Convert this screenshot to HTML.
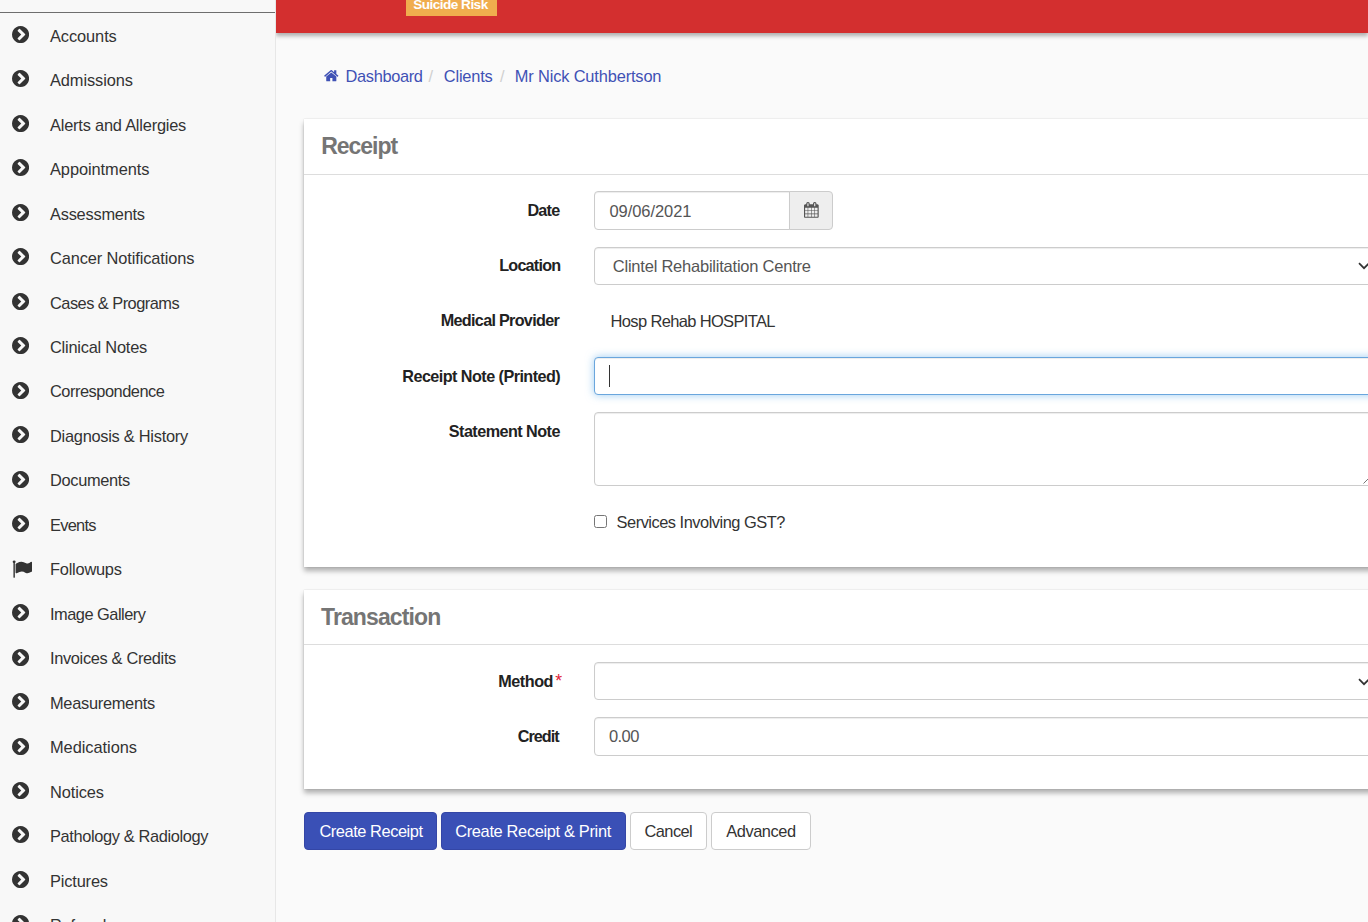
<!DOCTYPE html>
<html lang="en">
<head>
<meta charset="utf-8">
<title>Receipt</title>
<style>
*{box-sizing:border-box}
html,body{margin:0;padding:0}
body{width:1368px;height:922px;overflow:hidden;background:#fafafa;font-family:"Liberation Sans",sans-serif;font-size:15.4px;color:#333;position:relative}
a{text-decoration:none;color:inherit}
/* sidebar */
#side{z-index:5;position:absolute;left:0;top:0;width:276px;height:922px;background:#f8f8f8;border-right:1px solid #e7e7e7}
#side .hr{position:absolute;left:0;top:12px;width:275px;height:1px;background:#6e6e6e}
#side ul{list-style:none;margin:0;padding:0;position:absolute;left:0;top:13.5px;width:275px}
#side li{height:44.47px;position:relative}
#side li svg{position:absolute;left:12px;top:12.5px;width:17.1px;height:17.1px}
#side li svg.fl{left:12.1px;top:11.6px;width:20.07px;height:20.07px}
#side li span{position:absolute;left:50px;top:12.2px;font-size:16.4px;line-height:20px;color:#333;white-space:nowrap}
/* top bar */
#top{position:absolute;left:276px;top:0;width:1092px;height:33px;background:#d32f2f;box-shadow:0 3px 4px rgba(0,0,0,.3)}
#riskbox{position:absolute;left:130px;top:-6px;width:91px;height:22px;background:#f0ad4e}
#home{position:absolute;left:324.3px;top:69.3px;width:14.6px;height:12.4px}
.t{position:absolute;white-space:nowrap;line-height:20px;font-size:16.4px;color:#333}
.t.b{font-weight:bold;color:#222}
.t.bc{color:#3f51b5}
.t.sep{color:#d0d0d0}
.t.h{font-weight:bold;font-size:23px;line-height:28px;color:#757575}
.t.v{color:#555}
.t.w{color:#fff}
.sel{position:absolute;left:1358px;width:12px;height:8px}
/* panels */
.panel{position:absolute;left:304px;width:1100px;background:#fff;box-shadow:0 4px 5px rgba(0,0,0,.3),0 0 1.5px rgba(0,0,0,.14)}
.panel .hd{height:56px;border-bottom:1px solid #ddd;position:relative}
.ctl{position:absolute;height:38px;border:1px solid #ccc;border-radius:4px;background:#fff;box-shadow:inset 0 1px 1px rgba(0,0,0,.075)}
.ctl.focus{border-color:#6aa6dd;box-shadow:inset 0 1px 1px rgba(0,0,0,.075),0 0 8px rgba(102,175,233,.65)}
#cal{position:absolute;left:789px;top:191px;width:44px;height:39px;background:#eee;border:1px solid #ccc;border-radius:0 4px 4px 0}
#cal svg{position:absolute;left:14.3px;top:10.2px;width:14.7px;height:15.9px}
#caret{position:absolute;left:609px;top:365px;width:1px;height:22px;background:#333}
#chk{position:absolute;left:594px;top:515px;width:13px;height:13px;border:1px solid #767676;border-radius:2.5px;background:#fff}
.wide{width:900px}
.btn{position:absolute;top:812px;height:38px;border-radius:4px;border:1px solid #ccc;background:#fff}
.btn.pri{background:#3a50b6;border-color:#3446a6}
</style>
</head>
<body>
<div id="side">
<div class="hr"></div>
<ul id="menu">
<li><svg viewBox="128 128 1536 1536"><path fill="#333" fill-rule="evenodd" d="M845 1395l454-454q19-19 19-45t-19-45l-454-454q-19-19-45-19t-45 19l-102 102q-19 19-19 45t19 45l307 307-307 307q-19 19-19 45t19 45l102 102q19 19 45 19t45-19zm819-499q0 209-103 385.500t-279.500 279.500-385.500 103-385.500-103-279.500-279.500-103-385.500 103-385.500 279.500-279.500 385.500-103 385.500 103 279.500 279.500 103 385.500z"/></svg><span style="letter-spacing:-0.09px">Accounts</span></li>
<li><svg viewBox="128 128 1536 1536"><path fill="#333" fill-rule="evenodd" d="M845 1395l454-454q19-19 19-45t-19-45l-454-454q-19-19-45-19t-45 19l-102 102q-19 19-19 45t19 45l307 307-307 307q-19 19-19 45t19 45l102 102q19 19 45 19t45-19zm819-499q0 209-103 385.500t-279.500 279.500-385.500 103-385.500-103-279.500-279.500-103-385.500 103-385.500 279.500-279.500 385.500-103 385.500 103 279.500 279.500 103 385.500z"/></svg><span style="letter-spacing:-0.09px">Admissions</span></li>
<li><svg viewBox="128 128 1536 1536"><path fill="#333" fill-rule="evenodd" d="M845 1395l454-454q19-19 19-45t-19-45l-454-454q-19-19-45-19t-45 19l-102 102q-19 19-19 45t19 45l307 307-307 307q-19 19-19 45t19 45l102 102q19 19 45 19t45-19zm819-499q0 209-103 385.500t-279.500 279.500-385.500 103-385.500-103-279.500-279.500-103-385.500 103-385.500 279.500-279.500 385.500-103 385.500 103 279.500 279.500 103 385.500z"/></svg><span style="letter-spacing:-0.21px">Alerts and Allergies</span></li>
<li><svg viewBox="128 128 1536 1536"><path fill="#333" fill-rule="evenodd" d="M845 1395l454-454q19-19 19-45t-19-45l-454-454q-19-19-45-19t-45 19l-102 102q-19 19-19 45t19 45l307 307-307 307q-19 19-19 45t19 45l102 102q19 19 45 19t45-19zm819-499q0 209-103 385.500t-279.500 279.500-385.500 103-385.500-103-279.500-279.500-103-385.500 103-385.500 279.500-279.500 385.500-103 385.500 103 279.500 279.500 103 385.500z"/></svg><span style="letter-spacing:-0.07px">Appointments</span></li>
<li><svg viewBox="128 128 1536 1536"><path fill="#333" fill-rule="evenodd" d="M845 1395l454-454q19-19 19-45t-19-45l-454-454q-19-19-45-19t-45 19l-102 102q-19 19-19 45t19 45l307 307-307 307q-19 19-19 45t19 45l102 102q19 19 45 19t45-19zm819-499q0 209-103 385.500t-279.500 279.500-385.500 103-385.500-103-279.500-279.500-103-385.500 103-385.500 279.500-279.500 385.500-103 385.500 103 279.500 279.500 103 385.500z"/></svg><span style="letter-spacing:-0.24px">Assessments</span></li>
<li><svg viewBox="128 128 1536 1536"><path fill="#333" fill-rule="evenodd" d="M845 1395l454-454q19-19 19-45t-19-45l-454-454q-19-19-45-19t-45 19l-102 102q-19 19-19 45t19 45l307 307-307 307q-19 19-19 45t19 45l102 102q19 19 45 19t45-19zm819-499q0 209-103 385.500t-279.500 279.500-385.500 103-385.500-103-279.500-279.500-103-385.500 103-385.500 279.500-279.500 385.500-103 385.500 103 279.500 279.500 103 385.500z"/></svg><span style="letter-spacing:-0.12px">Cancer Notifications</span></li>
<li><svg viewBox="128 128 1536 1536"><path fill="#333" fill-rule="evenodd" d="M845 1395l454-454q19-19 19-45t-19-45l-454-454q-19-19-45-19t-45 19l-102 102q-19 19-19 45t19 45l307 307-307 307q-19 19-19 45t19 45l102 102q19 19 45 19t45-19zm819-499q0 209-103 385.500t-279.500 279.500-385.500 103-385.500-103-279.500-279.500-103-385.500 103-385.500 279.500-279.500 385.500-103 385.500 103 279.500 279.500 103 385.500z"/></svg><span style="letter-spacing:-0.53px">Cases &amp; Programs</span></li>
<li><svg viewBox="128 128 1536 1536"><path fill="#333" fill-rule="evenodd" d="M845 1395l454-454q19-19 19-45t-19-45l-454-454q-19-19-45-19t-45 19l-102 102q-19 19-19 45t19 45l307 307-307 307q-19 19-19 45t19 45l102 102q19 19 45 19t45-19zm819-499q0 209-103 385.500t-279.500 279.500-385.500 103-385.500-103-279.500-279.500-103-385.500 103-385.500 279.500-279.500 385.500-103 385.500 103 279.500 279.500 103 385.500z"/></svg><span style="letter-spacing:-0.23px">Clinical Notes</span></li>
<li><svg viewBox="128 128 1536 1536"><path fill="#333" fill-rule="evenodd" d="M845 1395l454-454q19-19 19-45t-19-45l-454-454q-19-19-45-19t-45 19l-102 102q-19 19-19 45t19 45l307 307-307 307q-19 19-19 45t19 45l102 102q19 19 45 19t45-19zm819-499q0 209-103 385.500t-279.500 279.500-385.500 103-385.500-103-279.500-279.500-103-385.500 103-385.500 279.500-279.500 385.500-103 385.500 103 279.500 279.500 103 385.500z"/></svg><span style="letter-spacing:-0.48px">Correspondence</span></li>
<li><svg viewBox="128 128 1536 1536"><path fill="#333" fill-rule="evenodd" d="M845 1395l454-454q19-19 19-45t-19-45l-454-454q-19-19-45-19t-45 19l-102 102q-19 19-19 45t19 45l307 307-307 307q-19 19-19 45t19 45l102 102q19 19 45 19t45-19zm819-499q0 209-103 385.500t-279.500 279.500-385.500 103-385.500-103-279.500-279.500-103-385.500 103-385.500 279.500-279.500 385.500-103 385.500 103 279.500 279.500 103 385.500z"/></svg><span style="letter-spacing:-0.27px">Diagnosis &amp; History</span></li>
<li><svg viewBox="128 128 1536 1536"><path fill="#333" fill-rule="evenodd" d="M845 1395l454-454q19-19 19-45t-19-45l-454-454q-19-19-45-19t-45 19l-102 102q-19 19-19 45t19 45l307 307-307 307q-19 19-19 45t19 45l102 102q19 19 45 19t45-19zm819-499q0 209-103 385.500t-279.500 279.500-385.500 103-385.500-103-279.500-279.500-103-385.500 103-385.500 279.500-279.500 385.500-103 385.500 103 279.500 279.500 103 385.500z"/></svg><span style="letter-spacing:-0.33px">Documents</span></li>
<li><svg viewBox="128 128 1536 1536"><path fill="#333" fill-rule="evenodd" d="M845 1395l454-454q19-19 19-45t-19-45l-454-454q-19-19-45-19t-45 19l-102 102q-19 19-19 45t19 45l307 307-307 307q-19 19-19 45t19 45l102 102q19 19 45 19t45-19zm819-499q0 209-103 385.500t-279.500 279.500-385.500 103-385.500-103-279.500-279.500-103-385.500 103-385.500 279.500-279.500 385.500-103 385.500 103 279.500 279.500 103 385.500z"/></svg><span style="letter-spacing:-0.72px">Events</span></li>
<li><svg class="fl" viewBox="0 0 1792 1792"><path fill="#333" d="M320 256q0 72-64 110v1266q0 13-9.500 22.500t-22.500 9.500h-64q-13 0-22.500-9.500t-9.500-22.500v-1266q-64-38-64-110 0-53 37.500-90.500t90.500-37.500 90.500 37.500 37.500 90.500zm1472 64v763q0 25-12.500 38.500t-39.500 27.500q-215 116-369 116-61 0-123.500-22t-108.500-48-115.500-48-142.500-22q-192 0-464 146-17 9-33 9-26 0-45-19t-19-45v-742q0-32 31-55 21-14 79-43 236-120 421-120 107 0 200 29t219 88q38 19 88 19 54 0 117.500-21t110-47 88-47 54.500-21q26 0 45 19t19 45z"/></svg><span style="letter-spacing:-0.23px">Followups</span></li>
<li><svg viewBox="128 128 1536 1536"><path fill="#333" fill-rule="evenodd" d="M845 1395l454-454q19-19 19-45t-19-45l-454-454q-19-19-45-19t-45 19l-102 102q-19 19-19 45t19 45l307 307-307 307q-19 19-19 45t19 45l102 102q19 19 45 19t45-19zm819-499q0 209-103 385.500t-279.500 279.500-385.500 103-385.500-103-279.500-279.500-103-385.500 103-385.500 279.500-279.500 385.500-103 385.500 103 279.500 279.500 103 385.500z"/></svg><span style="letter-spacing:-0.50px">Image Gallery</span></li>
<li><svg viewBox="128 128 1536 1536"><path fill="#333" fill-rule="evenodd" d="M845 1395l454-454q19-19 19-45t-19-45l-454-454q-19-19-45-19t-45 19l-102 102q-19 19-19 45t19 45l307 307-307 307q-19 19-19 45t19 45l102 102q19 19 45 19t45-19zm819-499q0 209-103 385.500t-279.500 279.500-385.500 103-385.500-103-279.500-279.500-103-385.500 103-385.500 279.500-279.500 385.500-103 385.500 103 279.500 279.500 103 385.500z"/></svg><span style="letter-spacing:-0.34px">Invoices &amp; Credits</span></li>
<li><svg viewBox="128 128 1536 1536"><path fill="#333" fill-rule="evenodd" d="M845 1395l454-454q19-19 19-45t-19-45l-454-454q-19-19-45-19t-45 19l-102 102q-19 19-19 45t19 45l307 307-307 307q-19 19-19 45t19 45l102 102q19 19 45 19t45-19zm819-499q0 209-103 385.500t-279.500 279.500-385.500 103-385.500-103-279.500-279.500-103-385.500 103-385.500 279.500-279.500 385.500-103 385.500 103 279.500 279.500 103 385.500z"/></svg><span style="letter-spacing:-0.29px">Measurements</span></li>
<li><svg viewBox="128 128 1536 1536"><path fill="#333" fill-rule="evenodd" d="M845 1395l454-454q19-19 19-45t-19-45l-454-454q-19-19-45-19t-45 19l-102 102q-19 19-19 45t19 45l307 307-307 307q-19 19-19 45t19 45l102 102q19 19 45 19t45-19zm819-499q0 209-103 385.500t-279.500 279.500-385.500 103-385.500-103-279.500-279.500-103-385.500 103-385.500 279.500-279.500 385.500-103 385.500 103 279.500 279.500 103 385.500z"/></svg><span style="letter-spacing:-0.04px">Medications</span></li>
<li><svg viewBox="128 128 1536 1536"><path fill="#333" fill-rule="evenodd" d="M845 1395l454-454q19-19 19-45t-19-45l-454-454q-19-19-45-19t-45 19l-102 102q-19 19-19 45t19 45l307 307-307 307q-19 19-19 45t19 45l102 102q19 19 45 19t45-19zm819-499q0 209-103 385.500t-279.500 279.500-385.500 103-385.500-103-279.500-279.500-103-385.500 103-385.500 279.500-279.500 385.500-103 385.500 103 279.500 279.500 103 385.500z"/></svg><span style="letter-spacing:-0.10px">Notices</span></li>
<li><svg viewBox="128 128 1536 1536"><path fill="#333" fill-rule="evenodd" d="M845 1395l454-454q19-19 19-45t-19-45l-454-454q-19-19-45-19t-45 19l-102 102q-19 19-19 45t19 45l307 307-307 307q-19 19-19 45t19 45l102 102q19 19 45 19t45-19zm819-499q0 209-103 385.500t-279.500 279.500-385.500 103-385.500-103-279.500-279.500-103-385.500 103-385.500 279.500-279.500 385.500-103 385.500 103 279.500 279.500 103 385.500z"/></svg><span style="letter-spacing:-0.37px">Pathology &amp; Radiology</span></li>
<li><svg viewBox="128 128 1536 1536"><path fill="#333" fill-rule="evenodd" d="M845 1395l454-454q19-19 19-45t-19-45l-454-454q-19-19-45-19t-45 19l-102 102q-19 19-19 45t19 45l307 307-307 307q-19 19-19 45t19 45l102 102q19 19 45 19t45-19zm819-499q0 209-103 385.500t-279.500 279.500-385.500 103-385.500-103-279.500-279.500-103-385.500 103-385.500 279.500-279.500 385.500-103 385.500 103 279.500 279.500 103 385.500z"/></svg><span style="letter-spacing:-0.17px">Pictures</span></li>
<li><svg viewBox="128 128 1536 1536"><path fill="#333" fill-rule="evenodd" d="M845 1395l454-454q19-19 19-45t-19-45l-454-454q-19-19-45-19t-45 19l-102 102q-19 19-19 45t19 45l307 307-307 307q-19 19-19 45t19 45l102 102q19 19 45 19t45-19zm819-499q0 209-103 385.500t-279.500 279.500-385.500 103-385.500-103-279.500-279.500-103-385.500 103-385.500 279.500-279.500 385.500-103 385.500 103 279.500 279.500 103 385.500z"/></svg><span style="letter-spacing:-0.27px">Referrals</span></li>
</ul>
</div>
<div id="top"><div id="riskbox"></div></div>
<svg id="home" viewBox="64 128 1664 1408"><path fill="#3f51b5" d="M1472 992v480q0 26-19 45t-45 19h-384v-384h-256v384h-384q-26 0-45-19t-19-45v-480q0-1 .5-3t.5-3l575-474 575 474q1 2 1 6zm223-69l-62 74q-8 9-21 11h-3q-13 0-21-7l-692-577-692 577q-12 8-24 7-13-2-21-11l-62-74q-8-10-7-23.500t11-21.500l719-599q32-26 76-26t76 26l244 204v-195q0-14 9-23t23-9h192q14 0 23 9t9 23v408l219 182q10 8 11 21.500t-7 23.500z"/></svg>

<div class="panel" id="p1" style="top:119px;height:448px"><div class="hd"></div></div>
<div class="panel" id="p2" style="top:590px;height:199px"><div class="hd" style="height:55px"></div></div>

<div class="ctl" style="left:594px;top:191px;height:39px;width:196px;border-radius:4px 0 0 4px"></div>
<div id="cal"><svg viewBox="64 0 1664 1792"><path fill="#555" d="M192 1664h288v-288h-288v288zm352 0h320v-288h-320v288zm-352-352h288v-320h-288v320zm352 0h320v-320h-320v320zm-352-384h288v-288h-288v288zm736 736h320v-288h-320v288zm-384-736h320v-288h-320v288zm768 736h288v-288h-288v288zm-384-352h320v-320h-320v320zm-352-864v-288q0-13-9.500-22.500t-22.500-9.500h-64q-13 0-22.500 9.500t-9.500 22.500v288q0 13 9.500 22.500t22.500 9.500h64q13 0 22.500-9.500t9.500-22.500zm736 864h288v-320h-288v320zm-384-384h320v-288h-320v288zm384 0h288v-288h-288v288zm32-480v-288q0-13-9.500-22.500t-22.500-9.500h-64q-13 0-22.500 9.500t-9.500 22.500v288q0 13 9.500 22.500t22.500 9.500h64q13 0 22.500-9.500t9.500-22.500zm384-64v1280q0 52-38 90t-90 38h-1408q-52 0-90-38t-38-90v-1280q0-52 38-90t90-38h128v-96q0-66 47-113t113-47h64q66 0 113 47t47 113v96h384v-96q0-66 47-113t113-47h64q66 0 113 47t47 113v96h128q52 0 90 38t38 90z"/></svg></div>
<div class="ctl wide" style="left:594px;top:247px"></div>
<div class="ctl wide focus" style="left:594px;top:357px"></div>
<div id="caret"></div>
<div class="ctl wide" style="left:594px;top:412px;height:74px"></div>
<div id="chk"></div>
<svg id="grip" viewBox="0 0 6 6" style="position:absolute;left:1363px;top:478px;width:6px;height:6px"><path d="M0.5 5.5 L5.5 0.5" stroke="#777" stroke-width="1" fill="none"/></svg>
<div class="ctl wide" style="left:594px;top:662px"></div>
<div class="ctl wide" style="left:594px;top:717px;height:39px"></div>

<div class="btn pri" style="left:304px;width:133px"></div>
<div class="btn pri" style="left:441px;width:185px"></div>
<div class="btn" style="left:630px;width:77px"></div>
<div class="btn" style="left:711px;width:100px"></div>

<!--TEXTS-->
<span id="bc_dash" class="t bc" style="left:345.60px;top:65.90px;font-size:16.4px;letter-spacing:-0.360px">Dashboard</span>
<span id="sep1" class="t sep" style="left:428.40px;top:65.90px;font-size:16.4px;letter-spacing:0.000px">/</span>
<span id="bc_cli" class="t bc" style="left:443.80px;top:65.90px;font-size:16.4px;letter-spacing:-0.195px">Clients</span>
<span id="sep2" class="t sep" style="left:500.00px;top:65.90px;font-size:16.4px;letter-spacing:0.000px">/</span>
<span id="bc_name" class="t bc" style="left:514.80px;top:65.90px;font-size:16.4px;letter-spacing:-0.150px">Mr Nick Cuthbertson</span>
<span id="risk" class="t b w" style="left:413.30px;top:-5.20px;font-size:13.6px;letter-spacing:-0.540px">Suicide Risk</span>
<span id="h_receipt" class="t h" style="left:321.20px;top:132.38px;font-size:23px;letter-spacing:-1.020px">Receipt</span>
<span id="h_trans" class="t h" style="left:321.00px;top:603.38px;font-size:23px;letter-spacing:-0.891px">Transaction</span>
<span id="l_date" class="t b" style="left:527.40px;top:199.50px;font-size:16.2px;letter-spacing:-0.750px">Date</span>
<span id="l_loc" class="t b" style="left:499.20px;top:254.90px;font-size:16.2px;letter-spacing:-0.784px">Location</span>
<span id="l_med" class="t b" style="left:440.80px;top:310.40px;font-size:16.2px;letter-spacing:-0.708px">Medical Provider</span>
<span id="l_rn" class="t b" style="left:402.32px;top:365.70px;font-size:16.2px;letter-spacing:-0.553px">Receipt Note (Printed)</span>
<span id="l_sn" class="t b" style="left:448.80px;top:420.50px;font-size:16.2px;letter-spacing:-0.547px">Statement Note</span>
<span id="l_method" class="t b" style="left:498.20px;top:670.70px;font-size:16.2px;letter-spacing:-0.446px">Method</span>
<span id="l_credit" class="t b" style="left:517.64px;top:725.80px;font-size:16.2px;letter-spacing:-0.936px">Credit</span>
<span id="v_date" class="t v" style="left:609.40px;top:201.00px;font-size:16.5px;letter-spacing:-0.050px">09/06/2021</span>
<span id="v_loc" class="t v" style="left:612.80px;top:255.90px;font-size:16.5px;letter-spacing:-0.225px">Clintel Rehabilitation Centre</span>
<span id="v_med" class="t " style="left:610.60px;top:310.80px;font-size:16.5px;letter-spacing:-0.659px">Hosp Rehab HOSPITAL</span>
<span id="v_gst" class="t " style="left:616.60px;top:511.70px;font-size:16.4px;letter-spacing:-0.486px">Services Involving GST?</span>
<span id="v_credit" class="t v" style="left:609.00px;top:725.80px;font-size:16.5px;letter-spacing:-0.570px">0.00</span>
<span id="b1" class="t w" style="left:319.40px;top:820.80px;font-size:16.4px;letter-spacing:-0.438px">Create Receipt</span>
<span id="b2" class="t w" style="left:455.20px;top:820.80px;font-size:16.4px;letter-spacing:-0.334px">Create Receipt &amp; Print</span>
<span id="b3" class="t " style="left:644.60px;top:821.00px;font-size:16.4px;letter-spacing:-0.590px">Cancel</span>
<span id="b4" class="t " style="left:726.16px;top:821.00px;font-size:16.4px;letter-spacing:-0.411px">Advanced</span>
<!--/TEXTS-->
<span id="ast" class="t" style="left:555.2px;top:670.8px;color:#e0203a;font-size:17.6px;letter-spacing:0">*</span>
<svg class="sel" style="top:262.3px" viewBox="0 0 12 8"><path d="M1 1.2 L6 6.2 L11 1.2" fill="none" stroke="#333" stroke-width="1.7"/></svg>
<svg class="sel" style="top:678px" viewBox="0 0 12 8"><path d="M1 1.2 L6 6.2 L11 1.2" fill="none" stroke="#333" stroke-width="1.7"/></svg>
</body>
</html>
